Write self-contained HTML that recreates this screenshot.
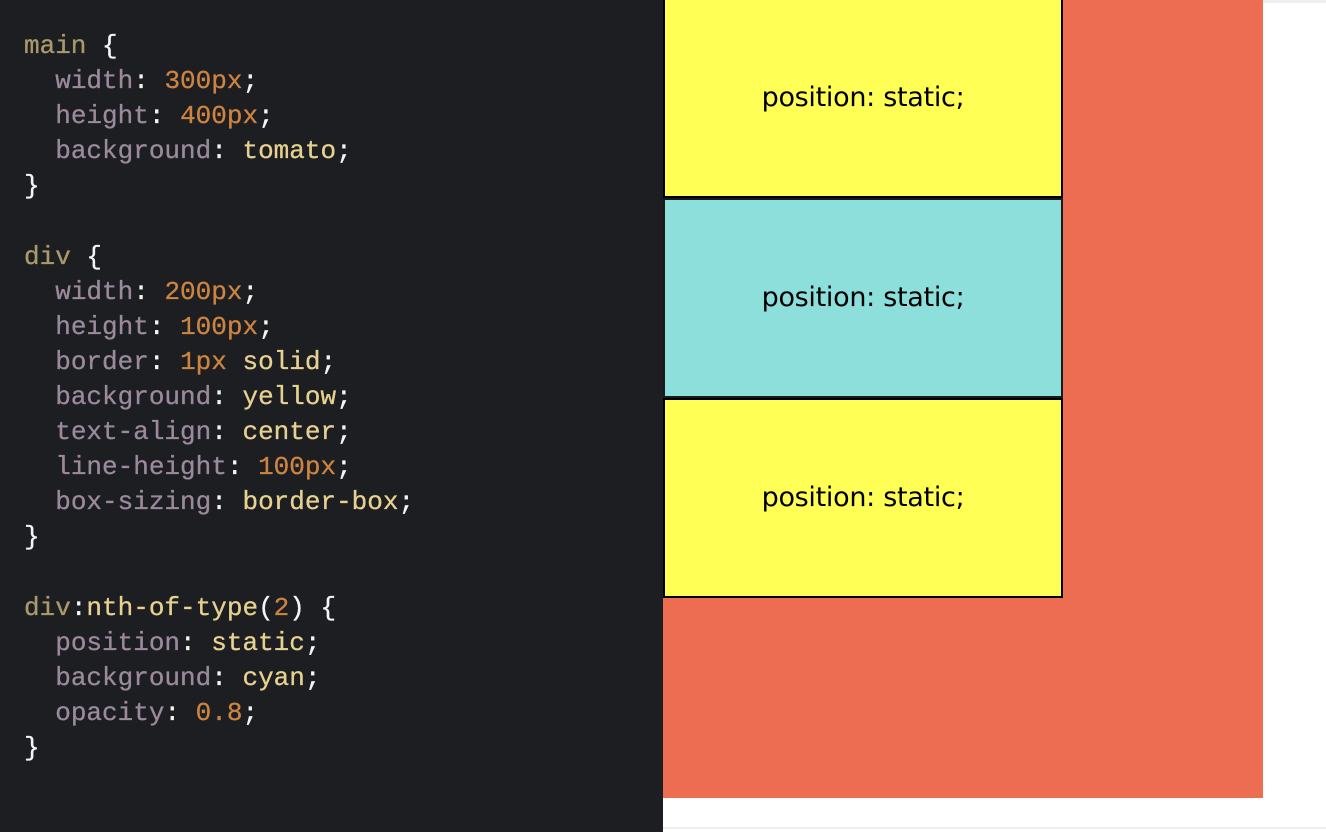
<!DOCTYPE html>
<html><head><style>
html,body{margin:0;padding:0;width:1326px;height:832px;overflow:hidden;background:#fff;}
#code{position:absolute;left:0;top:0;width:663px;height:832px;background:#1d1e22;}
pre{margin:0;position:absolute;left:24px;top:29px;font-family:"Liberation Mono",monospace;font-size:26px;line-height:35.1px;color:#f4f4f4;font-weight:500;-webkit-text-stroke:0.3px;}
.s{color:#a89a6a}.p{color:#9a8a9c}.n{color:#cc8440}.k{color:#e6d190}
#top{position:absolute;left:663px;top:0;width:663px;height:3px;background:#eee;}
#main{position:absolute;left:663px;top:0;width:600px;height:798px;background:#ec6d52;}
.d{position:absolute;left:0;width:400px;height:200px;border:2px solid #000;box-sizing:border-box;background:#ffff55;text-align:center;line-height:196px;font-family:"DejaVu Sans","Liberation Sans",sans-serif;font-size:27px;color:#000;letter-spacing:-0.3px;}
#bot{position:absolute;left:663px;top:827px;width:663px;height:2px;background:#eee;}
</style></head><body>
<div id="code"><pre><span class="s">main</span> {
  <span class="p">width</span>: <span class="n">300px</span>;
  <span class="p">height</span>: <span class="n">400px</span>;
  <span class="p">background</span>: <span class="k">tomato</span>;
}

<span class="s">div</span> {
  <span class="p">width</span>: <span class="n">200px</span>;
  <span class="p">height</span>: <span class="n">100px</span>;
  <span class="p">border</span>: <span class="n">1px</span> <span class="k">solid</span>;
  <span class="p">background</span>: <span class="k">yellow</span>;
  <span class="p">text-align</span>: <span class="k">center</span>;
  <span class="p">line-height</span>: <span class="n">100px</span>;
  <span class="p">box-sizing</span>: <span class="k">border-box</span>;
}

<span class="s">div</span>:<span class="k">nth-of-type</span>(<span class="n">2</span>) {
  <span class="p">position</span>: <span class="k">static</span>;
  <span class="p">background</span>: <span class="k">cyan</span>;
  <span class="p">opacity</span>: <span class="n">0.8</span>;
}</pre></div>
<div id="top"></div>
<div id="main">
<div class="d" style="top:-2px">position: static;</div>
<div class="d" style="top:198px;background:#8ddfdc;border-color:#1a1a1a">position: static;</div>
<div class="d" style="top:398px">position: static;</div>
</div>
<div id="bot"></div>
</body></html>
